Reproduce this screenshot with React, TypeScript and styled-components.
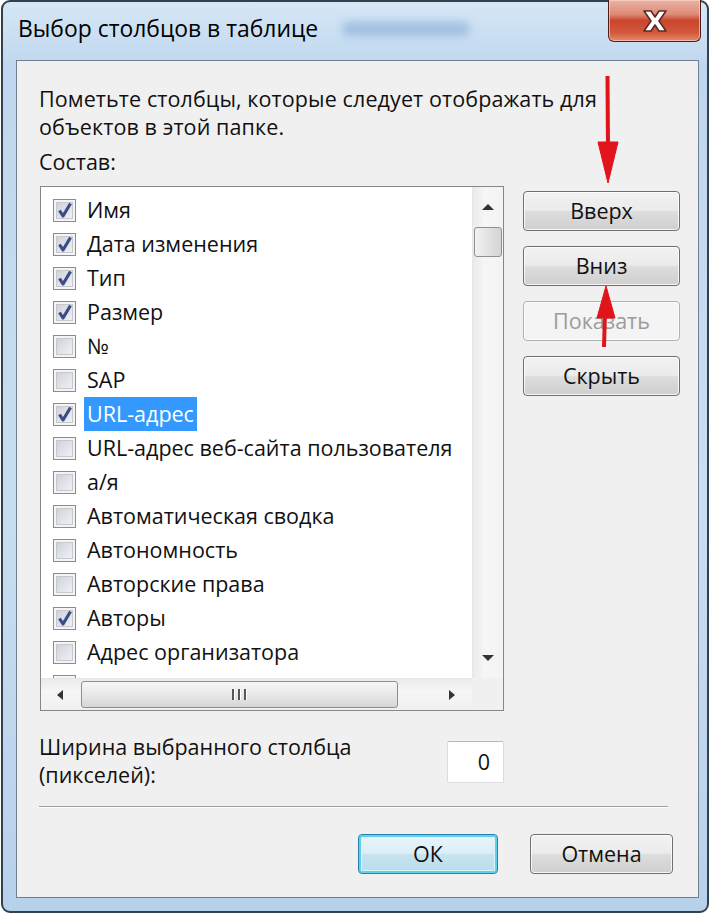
import React from 'react';
import styled, { createGlobalStyle } from 'styled-components';

const GlobalStyle = createGlobalStyle`
  html, body {
    margin: 0;
    padding: 0;
    background: #fff;
  }
  body {
    font-family: 'Open Sans', 'Noto Sans', sans-serif;
    color: #111;
  }
`;

const Window = styled.div`
  position: relative;
  box-sizing: border-box;
  width: 708px;
  height: 913px;
  margin-left: 1px;
  border: 2px solid #33404e;
  border-radius: 9px;
  background: linear-gradient(180deg, #d6e7f6 0%, #bfd7ee 7%, #c8def2 55%, #b8d1ea 100%);
  display: flex;
  flex-direction: column;
  padding: 0 8px 13px 13px;
`;

const TitleBar = styled.div`
  height: 58px;
  display: flex;
  align-items: center;
`;

const TitleText = styled.div`
  font-size: 22.9px;
  padding-left: 2px;
  padding-bottom: 6px;
  color: #000;
  white-space: nowrap;
`;

const BlurredTitle = styled.span`
  margin-left: 24px;
  width: 128px;
  height: 14px;
  margin-bottom: 4px;
  border-radius: 7px;
  background: #9fbfe0;
  filter: blur(4px);
`;

const CloseButton = styled.div`
  margin-left: auto;
  margin-right: -2px;
  align-self: flex-start;
  margin-top: -2px;
  width: 93px;
  height: 42px;
  box-sizing: border-box;
  border: 1px solid #4d1f18;
  border-top: none;
  border-radius: 0 0 6px 6px;
  background: linear-gradient(180deg, #eab3a4 0%, #de8a76 35%, #c9452c 50%, #d3593c 80%, #e58a6a 100%);
  display: flex;
  align-items: center;
  justify-content: center;
  box-shadow: inset 0 0 0 1px rgba(255, 220, 210, 0.6);
`;

const Panel = styled.div`
  flex: 1;
  border: 1px solid #6f7f90;
  background: #f0f0f0;
  padding: 24px 25px 0 22px;
  display: flex;
  flex-direction: column;
  font-size: 21.5px;
  line-height: 28px;
`;

const Intro = styled.div`
  white-space: nowrap;
  letter-spacing: 0.1px;
`;

const Label = styled.div<{ $gap?: number }>`
  margin-top: ${(p) => p.$gap ?? 0}px;
`;

const Main = styled.div`
  display: flex;
  gap: 19px;
  margin-top: 10px;
`;

const ListBox = styled.div`
  flex: none;
  box-sizing: border-box;
  width: 464px;
  height: 525px;
  margin-left: 1px;
  border: 1px solid #828790;
  background: #fff;
  display: grid;
  grid-template-columns: 1fr 31px;
  grid-template-rows: 1fr 32px;
`;

const Items = styled.div`
  overflow: hidden;
  padding-top: 6px;
`;

const Row = styled.div`
  height: 34px;
  display: flex;
  align-items: center;
  padding-left: 12px;
  white-space: nowrap;
`;

const Box = styled.div`
  box-sizing: border-box;
  width: 23px;
  height: 23px;
  flex: none;
  border: 1px solid #8a8c90;
  background: linear-gradient(135deg, #c9ccd6 0%, #e2e4eb 55%, #f6f6f8 100%);
  box-shadow: inset 0 0 0 2px #f4f4f4, inset 0 0 0 3px #c6c8ce;
  display: flex;
  align-items: center;
  justify-content: center;
`;

const ItemText = styled.span<{ $selected?: boolean }>`
  margin-left: 8px;
  padding: 0 3px;
  line-height: 34px;
  background: ${(p) => (p.$selected ? '#3399ff' : 'transparent')};
  color: ${(p) => (p.$selected ? '#fff' : '#111')};
`;

const VScroll = styled.div`
  border-left: 1px solid #e6e6e6;
  background: linear-gradient(90deg, #eaeaea, #f6f6f6 40%, #f3f3f3);
  display: flex;
  flex-direction: column;
  align-items: center;
`;

const ArrowCell = styled.div<{ $end?: boolean }>`
  height: 40px;
  width: 100%;
  margin-top: ${(p) => (p.$end ? 'auto' : '0')};
  display: flex;
  align-items: center;
  justify-content: center;
`;

const VThumb = styled.div`
  box-sizing: border-box;
  width: 28px;
  height: 30px;
  border: 1px solid #909090;
  border-radius: 3px;
  background: linear-gradient(90deg, #f2f2f2, #e2e2e2 50%, #d4d4d4);
`;

const HScroll = styled.div`
  border-top: 1px solid #e6e6e6;
  background: linear-gradient(180deg, #eaeaea, #f6f6f6 40%, #f0f0f0);
  display: flex;
  align-items: center;
`;

const HArrow = styled.div<{ $end?: boolean }>`
  width: 40px;
  margin-left: ${(p) => (p.$end ? 'auto' : '0')};
  display: flex;
  justify-content: center;
`;

const HThumb = styled.div`
  box-sizing: border-box;
  width: 317px;
  height: 27px;
  border: 1px solid #8e8e8e;
  border-radius: 3px;
  background: linear-gradient(180deg, #f6f6f6, #e8e8e8 50%, #d6d6d6);
  display: flex;
  align-items: center;
  justify-content: center;
  gap: 3px;
`;

const Grip = styled.span`
  width: 2px;
  height: 11px;
  background: #555;
  border-right: 1px solid #fff;
`;

const Corner = styled.div`
  background: #f0f0f0;
`;

const SideButtons = styled.div`
  flex: none;
  display: flex;
  flex-direction: column;
  gap: 15px;
  padding-top: 5px;
`;

const Button = styled.div<{ $w?: number; $disabled?: boolean; $default?: boolean }>`
  flex: none;
  box-sizing: border-box;
  width: ${(p) => p.$w ?? 157}px;
  height: 40px;
  border: 1px solid ${(p) => (p.$disabled ? '#adb2b5' : p.$default ? '#2c7fa6' : '#707070')};
  border-radius: 4px;
  background: ${(p) =>
    p.$disabled
      ? '#f4f4f4'
      : p.$default
      ? 'linear-gradient(180deg, #eaf6fb 0%, #dbeef6 48%, #c6e4f0 52%, #b9dcec 100%)'
      : 'linear-gradient(180deg, #f2f2f2 0%, #ebebeb 48%, #dddddd 52%, #cfcfcf 100%)'};
  box-shadow: ${(p) =>
    p.$default ? 'inset 0 0 0 2px #5fd0f0, inset 0 0 0 3px #d8f4fb' : 'inset 0 0 0 1px rgba(255,255,255,0.8)'};
  color: ${(p) => (p.$disabled ? '#9b9b9b' : '#111')};
  display: flex;
  align-items: center;
  justify-content: center;
  font-size: 21.5px;
`;

const WidthRow = styled.div`
  width: 465px;
  display: flex;
  justify-content: space-between;
  align-items: flex-start;
  margin-top: 22px;
`;

const NumberBox = styled.div`
  box-sizing: border-box;
  width: 57px;
  height: 42px;
  margin-top: 8px;
  border: 1px solid #dcdcdc;
  border-top-color: #b9b9b9;
  border-radius: 2px;
  background: #fff;
  display: flex;
  align-items: center;
  justify-content: flex-end;
  padding-right: 13px;
`;

const Separator = styled.div`
  width: 629px;
  height: 1px;
  margin-top: 17px;
  background: #a0a0a0;
  border-bottom: 1px solid #fff;
`;

const Footer = styled.div`
  display: flex;
  justify-content: flex-end;
  gap: 32px;
  margin-top: 26px;
`;

const Annotations = styled.svg`
  position: absolute;
  left: -3px;
  top: -2px;
  pointer-events: none;
`;

type Item = { name: string; checked: boolean; selected?: boolean };

const items: Item[] = [
  { name: 'Имя', checked: true },
  { name: 'Дата изменения', checked: true },
  { name: 'Тип', checked: true },
  { name: 'Размер', checked: true },
  { name: '№', checked: false },
  { name: 'SAP', checked: false },
  { name: 'URL-адрес', checked: true, selected: true },
  { name: 'URL-адрес веб-сайта пользователя', checked: false },
  { name: 'а/я', checked: false },
  { name: 'Автоматическая сводка', checked: false },
  { name: 'Автономность', checked: false },
  { name: 'Авторские права', checked: false },
  { name: 'Авторы', checked: true },
  { name: 'Адрес организатора', checked: false },
  { name: '', checked: false },
];

const Check = () => (
  <svg width="18" height="18" viewBox="0 0 18 18">
    <path d="M3.5 9.5 L7 15 L14.5 2.5" fill="none" stroke="#3b4d84" strokeWidth="3.2" strokeLinejoin="round" />
  </svg>
);

const Tri = ({ dir }: { dir: 'up' | 'down' | 'left' | 'right' }) => {
  const pts = {
    up: '1,9 7,3 13,9',
    down: '1,3 7,9 13,3',
    left: '9,1 3,6 9,11',
    right: '4,1 10,6 4,11',
  }[dir];
  return (
    <svg width="14" height="12" viewBox="0 0 14 12">
      <polygon points={pts} fill="#333" />
    </svg>
  );
};

const App: React.FC = () => {
  return (
    <>
      <GlobalStyle />
      <Window>
        <TitleBar>
          <TitleText>Выбор столбцов в таблице</TitleText>
          <BlurredTitle />
          <CloseButton>
            <svg width="30" height="26" viewBox="0 0 30 26">
              <path
                d="M4 3 H11 L15 9 L19 3 H26 L19 13 L26 23 H19 L15 17 L11 23 H4 L11 13 Z"
                fill="#fff"
                stroke="#5a2b22"
                strokeWidth="1.6"
                strokeLinejoin="round"
              />
            </svg>
          </CloseButton>
        </TitleBar>
        <Panel>
          <Intro>
            Пометьте столбцы, которые следует отображать для
            <br />
            объектов в этой папке.
          </Intro>
          <Label $gap={7}>Состав:</Label>
          <Main>
            <ListBox>
              <Items>
                {items.map((it, i) => (
                  <Row key={i}>
                    <Box>{it.checked && <Check />}</Box>
                    {it.name && <ItemText $selected={it.selected}>{it.name}</ItemText>}
                  </Row>
                ))}
              </Items>
              <VScroll>
                <ArrowCell>
                  <Tri dir="up" />
                </ArrowCell>
                <VThumb />
                <ArrowCell $end>
                  <Tri dir="down" />
                </ArrowCell>
              </VScroll>
              <HScroll>
                <HArrow>
                  <Tri dir="left" />
                </HArrow>
                <HThumb>
                  <Grip />
                  <Grip />
                  <Grip />
                </HThumb>
                <HArrow $end>
                  <Tri dir="right" />
                </HArrow>
              </HScroll>
              <Corner />
            </ListBox>
            <SideButtons>
              <Button>Вверх</Button>
              <Button>Вниз</Button>
              <Button $disabled>Показать</Button>
              <Button>Скрыть</Button>
            </SideButtons>
          </Main>
          <WidthRow>
            <div>
              Ширина выбранного столбца
              <br />
              (пикселей):
            </div>
            <NumberBox>0</NumberBox>
          </WidthRow>
          <Separator />
          <Footer>
            <Button $w={140} $default>
              ОК
            </Button>
            <Button $w={143}>Отмена</Button>
          </Footer>
        </Panel>
        <Annotations width="710" height="914" viewBox="0 0 710 914">
          <g fill="#e0141a" stroke="#e0141a">
            <line x1="607.5" y1="76" x2="608" y2="150" strokeWidth="4" />
            <polygon points="598,142 618,142 608,183" strokeWidth="1" />
            <line x1="604" y1="347" x2="605" y2="312" strokeWidth="4" />
            <polygon points="597,318 615,318 606,286" strokeWidth="1" />
          </g>
        </Annotations>
      </Window>
    </>
  );
};

export default App;
